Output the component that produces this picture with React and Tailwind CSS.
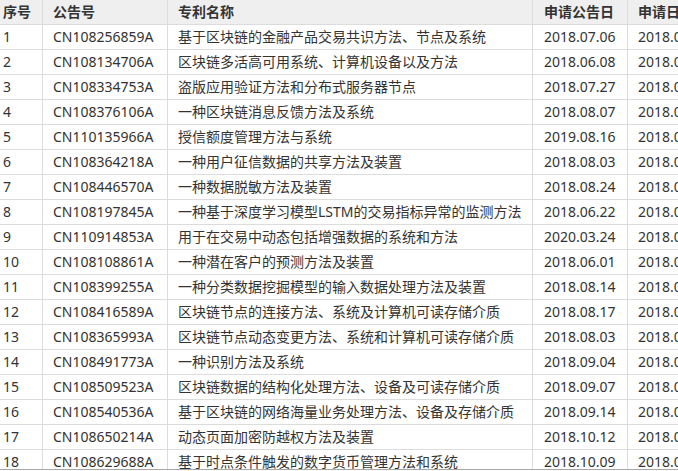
import React from "react";

const rows = [
  ["1", "CN108256859A", "基于区块链的金融产品交易共识方法、节点及系统", "2018.07.06", "2018.03.21"],
  ["2", "CN108134706A", "区块链多活高可用系统、计算机设备以及方法", "2018.06.08", "2018.01.19"],
  ["3", "CN108334753A", "盗版应用验证方法和分布式服务器节点", "2018.07.27", "2018.01.25"],
  ["4", "CN108376106A", "一种区块链消息反馈方法及系统", "2018.08.07", "2018.01.24"],
  ["5", "CN110135966A", "授信额度管理方法与系统", "2019.08.16", "2018.02.09"],
  ["6", "CN108364218A", "一种用户征信数据的共享方法及装置", "2018.08.03", "2018.01.26"],
  ["7", "CN108446570A", "一种数据脱敏方法及装置", "2018.08.24", "2018.02.14"],
  ["8", "CN108197845A", "一种基于深度学习模型LSTM的交易指标异常的监测方法", "2018.06.22", "2018.02.28"],
  ["9", "CN110914853A", "用于在交易中动态包括增强数据的系统和方法", "2020.03.24", "2018.04.23"],
  ["10", "CN108108861A", "一种潜在客户的预测方法及装置", "2018.06.01", "2018.01.09"],
  ["11", "CN108399255A", "一种分类数据挖掘模型的输入数据处理方法及装置", "2018.08.14", "2018.02.23"],
  ["12", "CN108416589A", "区块链节点的连接方法、系统及计算机可读存储介质", "2018.08.17", "2018.03.08"],
  ["13", "CN108365993A", "区块链节点动态变更方法、系统和计算机可读存储介质", "2018.08.03", "2018.03.09"],
  ["14", "CN108491773A", "一种识别方法及系统", "2018.09.04", "2018.03.12"],
  ["15", "CN108509523A", "区块链数据的结构化处理方法、设备及可读存储介质", "2018.09.07", "2018.03.20"],
  ["16", "CN108540536A", "基于区块链的网络海量业务处理方法、设备及存储介质", "2018.09.14", "2018.03.21"],
  ["17", "CN108650214A", "动态页面加密防越权方法及装置", "2018.10.12", "2018.04.28"],
  ["18", "CN108629688A", "基于时点条件触发的数字货币管理方法和系统", "2018.10.09", "2018.05.02"],
];

function Row({ cells, header }) {
  const base =
    "flex items-center h-full border-r border-[#dcdcdc] whitespace-nowrap overflow-hidden shrink-0";
  return (
    <div
      className={
        "flex h-[25px] border-b border-[#dcdcdc] " +
        (header ? "bg-[#efefef] font-bold text-[#333333]" : "bg-white text-[#333333]")
      }
    >
      <div className={base + " w-[43px] pl-[3px]"}>{cells[0]}</div>
      <div className={base + " w-[125px] pl-[10px]"}>{cells[1]}</div>
      <div className={base + " w-[365px] pl-[10px]"}>{cells[2]}</div>
      <div className={base + " w-[95px] pl-[11px]"}>{cells[3]}</div>
      <div className={base + " w-[95px] pl-[10px]"}>{cells[4]}</div>
    </div>
  );
}

export default function App() {
  return (
    <div
      className="w-[678px] h-[471px] overflow-hidden bg-white flex flex-col text-[14px] leading-none"
      style={{ fontFamily: '"Noto Sans", "Noto Sans CJK SC", sans-serif' }}
    >
      <div className="h-[469px] overflow-hidden">
        <div className="w-[740px]">
          <Row header cells={["序号", "公告号", "专利名称", "申请公告日", "申请日"]} />
          {rows.map((r) => (
            <Row key={r[0]} cells={r} />
          ))}
        </div>
      </div>
      <div className="h-[2px] border-t border-[#a8a8a8] bg-white" />
    </div>
  );
}
